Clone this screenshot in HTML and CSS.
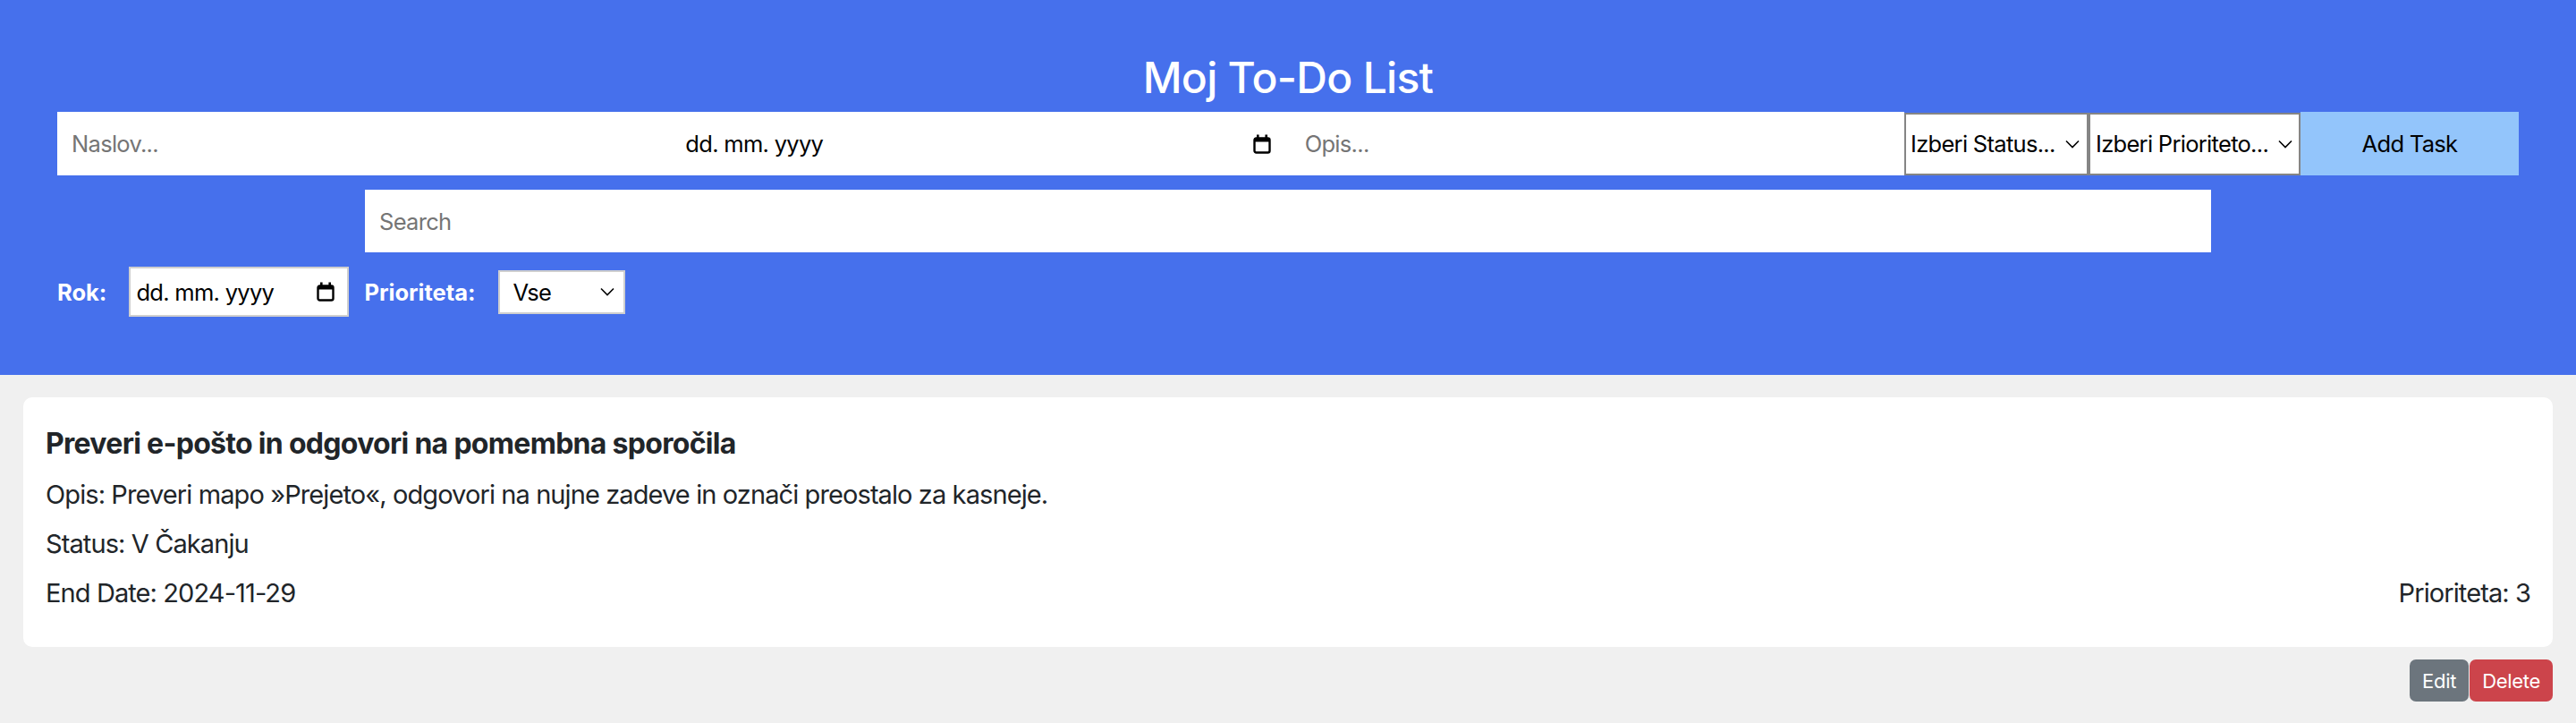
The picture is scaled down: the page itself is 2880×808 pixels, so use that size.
FILE: index.html
```html
<!DOCTYPE html>
<html lang="sl">
<head>
<meta charset="utf-8">
<title>Moj To-Do List</title>
<link rel="stylesheet" href="styles.css">
</head>
<body>
<header class="top">
  <h1 class="title">Moj To-Do List</h1>
  <div class="add-row">
    <input class="field" type="text" placeholder="Naslov...">
    <div class="field date-field">
      <span>dd. mm. yyyy</span>
      <svg class="cal" width="20" height="22" viewBox="0 0 20 22"><rect x="1.5" y="4.5" width="17" height="16" rx="2" fill="none" stroke="#000" stroke-width="2.4"/><rect x="1.5" y="4" width="17" height="4.5" fill="#000"/><rect x="4" y="0.5" width="2.6" height="4.5" fill="#000"/><rect x="13.4" y="0.5" width="2.6" height="4.5" fill="#000"/></svg>
    </div>
    <input class="field" type="text" placeholder="Opis...">
    <div class="pick pick-status"><span>Izberi Status...</span><svg class="chev" width="16" height="10" viewBox="0 0 16 10"><polyline points="1,1.5 8,8.5 15,1.5" fill="none" stroke="#000" stroke-width="1.6"/></svg></div>
    <div class="pick pick-prio"><span>Izberi Prioriteto...</span><svg class="chev" width="16" height="10" viewBox="0 0 16 10"><polyline points="1,1.5 8,8.5 15,1.5" fill="none" stroke="#000" stroke-width="1.6"/></svg></div>
    <button class="add-btn" type="button">Add Task</button>
  </div>
  <div class="search-row">
    <input class="search" type="text" placeholder="Search">
  </div>
  <div class="filter-row">
    <label class="flabel">Rok:</label>
    <div class="fdate">
      <span>dd. mm. yyyy</span>
      <svg class="cal" width="20" height="22" viewBox="0 0 20 22"><rect x="1.5" y="4.5" width="17" height="16" rx="2" fill="none" stroke="#000" stroke-width="2.4"/><rect x="1.5" y="4" width="17" height="4.5" fill="#000"/><rect x="4" y="0.5" width="2.6" height="4.5" fill="#000"/><rect x="13.4" y="0.5" width="2.6" height="4.5" fill="#000"/></svg>
    </div>
    <label class="flabel flabel-prio">Prioriteta:</label>
    <div class="fselect"><span>Vse</span><svg class="chev" width="16" height="10" viewBox="0 0 16 10"><polyline points="1,1.5 8,8.5 15,1.5" fill="none" stroke="#000" stroke-width="1.6"/></svg></div>
  </div>
</header>
<main class="list">
  <article class="card">
    <h3 class="card-title">Preveri e-pošto in odgovori na pomembna sporočila</h3>
    <p class="card-line">Opis: Preveri mapo »Prejeto«, odgovori na nujne zadeve in označi preostalo za kasneje.</p>
    <p class="card-line">Status: V Čakanju</p>
    <div class="card-foot"><span>End Date: 2024-11-29</span><span>Prioriteta: 3</span></div>
  </article>
  <div class="actions">
    <button class="btn btn-edit" type="button">Edit</button>
    <button class="btn btn-del" type="button">Delete</button>
  </div>
</main>
</body>
</html>
```
FILE: styles.css
```css
* { box-sizing: border-box; }
html, body { margin: 0; padding: 0; }
body {
  background: #f0f0f0;
  font-family: Inter, "Noto Sans", sans-serif;
  color: #212529;
  height: 808px;
  overflow: hidden;
}
.top {
  background: #4670ec;
  height: 419px;
  padding: 58px 64px 0 64px;
}
.title {
  margin: 0 0 9px 0;
  font-size: 48px;
  line-height: 58px;
  font-weight: 500;
  letter-spacing: -0.7px;
  color: #fff;
  text-align: center;
}
.add-row {
  display: flex;
  align-items: center;
  height: 71px;
}
.field {
  flex: 1 1 0;
  min-width: 0;
  height: 71px;
  border: none;
  outline: none;
  background: #fff;
  font-family: Inter, sans-serif;
  font-size: 25.5px;
  letter-spacing: -0.7px;
  color: #000;
  padding: 0 16px;
  margin: 0;
}
.field::placeholder, .search::placeholder { color: #757575; }
.date-field {
  display: flex;
  align-items: center;
  justify-content: space-between;
  padding: 0 22px 0 16px;
}
.pick {
  height: 70px;
  background: #fff;
  border: 2px solid #858585;
  display: flex;
  align-items: center;
  justify-content: space-between;
  font-size: 25.5px;
  letter-spacing: -0.7px;
  color: #000;
  white-space: nowrap;
  overflow: hidden;
}
.pick-status { width: 206px; padding: 0 8px 0 5px; }
.pick-prio { width: 237px; padding: 0 7px 0 6px; }
.add-btn {
  width: 244px;
  height: 71px;
  border: none;
  margin: 0;
  background: #93c5fb;
  font-family: Inter, sans-serif;
  font-size: 25.5px;
  letter-spacing: -0.7px;
  color: #000;
}
.search-row {
  display: flex;
  justify-content: center;
  margin-top: 16px;
}
.search {
  width: 2064px;
  height: 70px;
  border: none;
  outline: none;
  background: #fff;
  padding: 0 16px;
  font-family: Inter, sans-serif;
  font-size: 25.5px;
  letter-spacing: -0.7px;
}
.filter-row {
  display: flex;
  align-items: center;
  margin-top: 16px;
  height: 56px;
}
.flabel {
  color: #fff;
  font-weight: 700;
  font-size: 25.5px;
  letter-spacing: 0;
  margin-right: 25px;
}
.flabel-prio { margin-left: 17px; }
.fdate {
  width: 246px;
  height: 56px;
  background: #fff;
  border: 2px solid #cfcfcf;
  display: flex;
  align-items: center;
  justify-content: space-between;
  padding: 0 14px 0 6px;
  font-size: 25.5px;
  letter-spacing: -0.7px;
  color: #000;
}
.fselect {
  width: 142px;
  height: 49px;
  background: #fff;
  border: 2px solid #cfcfcf;
  display: flex;
  align-items: center;
  justify-content: space-between;
  padding: 0 10px 0 15px;
  font-size: 25.5px;
  letter-spacing: -0.7px;
  color: #000;
}
.chev { display: block; flex-shrink: 0; }
.cal { display: block; flex-shrink: 0; }
.list {
  padding: 25px 26px 0 26px;
}
.card {
  background: #fff;
  border-radius: 10px;
  padding: 25px 25px 36px 25px;
}
.card-title {
  margin: 0 0 6px 0;
  font-size: 32px;
  line-height: 54px;
  font-weight: 700;
  letter-spacing: -0.7px;
}
.card-line {
  margin: 0 0 7px 0;
  font-size: 29px;
  line-height: 48px;
  letter-spacing: -0.9px;
}
.card-foot {
  display: flex;
  justify-content: space-between;
  font-size: 29px;
  line-height: 48px;
  letter-spacing: -0.9px;
}
.actions {
  display: flex;
  justify-content: flex-end;
  gap: 1px;
  margin-top: 14px;
}
.btn {
  border: none;
  margin: 0;
  border-radius: 7px;
  height: 47px;
  padding: 0 14px;
  font-family: Inter, sans-serif;
  font-size: 22px;
  letter-spacing: -0.3px;
  color: #fff;
}
.btn-edit { background: #6c757d; }
.btn-del { background: #cc444b; }
```
